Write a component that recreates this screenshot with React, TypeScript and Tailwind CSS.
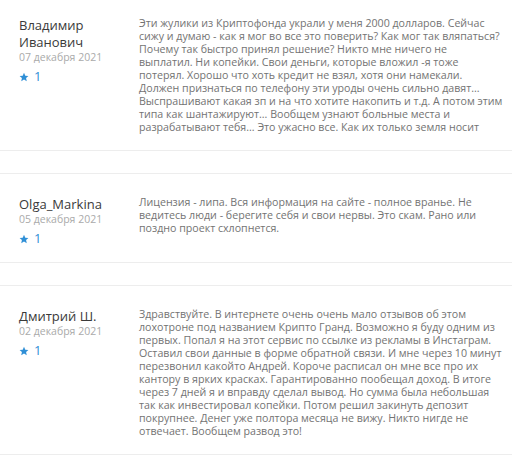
const reviews = [
  {
    name: ["Владимир", "Иванович"],
    date: "07 декабря 2021",
    likes: 1,
    text: [
      "Эти жулики из Криптофонда украли у меня 2000 долларов. Сейчас",
      "сижу и думаю - как я мог во все это поверить? Как мог так вляпаться?",
      "Почему так быстро принял решение? Никто мне ничего не",
      "выплатил. Ни копейки. Свои деньги, которые вложил -я тоже",
      "потерял. Хорошо что хоть кредит не взял, хотя они намекали.",
      "Должен признаться по телефону эти уроды очень сильно давят...",
      "Выспрашивают какая зп и на что хотите накопить и т.д. А потом этим",
      "типа как шантажируют... Вообщем узнают больные места и",
      "разрабатывают тебя... Это ужасно все. Как их только земля носит",
    ],
  },
  {
    name: ["Olga_Markina"],
    date: "05 декабря 2021",
    likes: 1,
    text: [
      "Лицензия - липа. Вся информация на сайте - полное вранье. Не",
      "ведитесь люди - берегите себя и свои нервы. Это скам. Рано или",
      "поздно проект схлопнется.",
    ],
  },
  {
    name: ["Дмитрий Ш."],
    date: "02 декабря 2021",
    likes: 1,
    text: [
      "Здравствуйте. В интернете очень очень мало отзывов об этом",
      "лохотроне под названием Крипто Гранд. Возможно я буду одним из",
      "первых. Попал я на этот сервис по ссылке из рекламы в Инстаграм.",
      "Оставил свои данные в форме обратной связи. И мне через 10 минут",
      "перезвонил какойто Андрей. Короче расписал он мне все про их",
      "кантору в ярких красках. Гарантированно пообещал доход. В итоге",
      "через 7 дней я и вправду сделал вывод. Но сумма была небольшая",
      "так как инвестировал копейки. Потом решил закинуть депозит",
      "покрупнее. Денег уже полтора месяца не вижу. Никто нигде не",
      "отвечает. Вообщем развод это!",
    ],
  },
];

function Star() {
  return (
    <svg viewBox="0 0 24 24" className="w-[10px] h-[10px] text-[#2f8fd6]" fill="currentColor" aria-hidden="true">
      <path d="M12 1.8l3.1 6.9 7.5.8-5.6 5.1 1.6 7.4L12 18.2 5.4 22l1.6-7.4L1.4 9.5l7.5-.8z" />
    </svg>
  );
}

export default function App() {
  return (
    <div className="min-h-screen bg-white font-['Open_Sans',sans-serif] overflow-hidden">
      <div className="-mt-[6px] flex flex-col gap-[22px]">
        {reviews.map((r) => (
          <div key={r.date} className="flex border-y border-[#ededed] pl-[19px] pt-[22px] pb-[16px]">
            <div className="w-[120px] shrink-0">
              <div className="text-[13px] leading-[17px] text-[#3a3a3a]">
                {r.name.map((n) => (
                  <div key={n}>{n}</div>
                ))}
              </div>
              <div className="text-[10.5px] leading-[13px] text-[#aaa]">{r.date}</div>
              <div className="mt-[6px] flex items-center gap-[5px] h-[14px] text-[13px] text-[#2f8fd6]">
                <Star />
                <span>{r.likes}</span>
              </div>
            </div>
            <div className="text-[10.65px] leading-[13px] text-[#737373]">
              {r.text.map((line, i) => (
                <div key={i} className="whitespace-nowrap">{line}</div>
              ))}
            </div>
          </div>
        ))}
      </div>
    </div>
  );
}
